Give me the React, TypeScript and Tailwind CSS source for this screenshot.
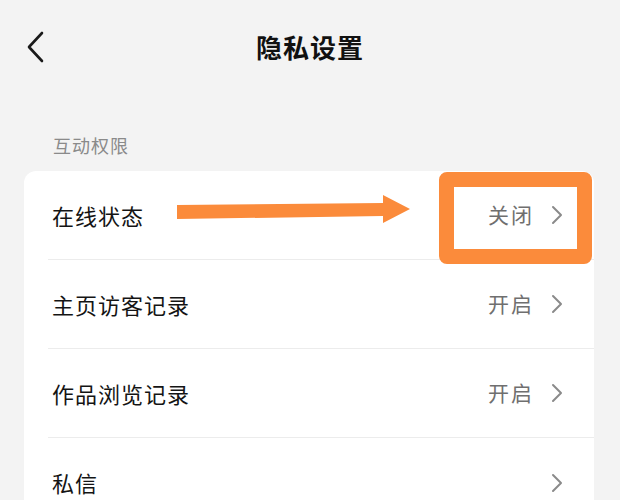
import React from "react";

const Chevron = () => (
  <svg width="14" height="24" viewBox="0 0 14 24" fill="none">
    <path d="M3 4 L11 12 L3 20" stroke="#8a8a8a" strokeWidth="2" strokeLinecap="round" strokeLinejoin="round" />
  </svg>
);

const rows = [
  { label: "在线状态", value: "关闭" },
  { label: "主页访客记录", value: "开启" },
  { label: "作品浏览记录", value: "开启" },
  { label: "私信", value: "" },
];

export default function App() {
  return (
    <div
      className="w-[620px] h-[500px] overflow-hidden bg-[#f3f3f3]"
      style={{ fontFamily: '"Noto Sans CJK SC", "Noto Sans", sans-serif' }}
    >
      <div className="grid grid-cols-[1fr_auto_1fr] items-center h-[94px]">
        <div className="pl-[24px] flex items-center">
          <svg width="22" height="34" viewBox="0 0 22 34" fill="none">
            <path d="M18 3 L5 17 L18 31" stroke="#1a1a1a" strokeWidth="2.6" strokeLinecap="round" strokeLinejoin="round" />
          </svg>
        </div>
        <div className="text-[26px] font-bold text-[#111] leading-none tracking-[1px]">隐私设置</div>
        <div />
      </div>
      <div className="pl-[53px] pt-[38px] pb-[13px] text-[18px] leading-[26px] text-[#8a8a8a] tracking-[1px]">互动权限</div>
      <div className="relative ml-[24px] w-[570px] bg-white rounded-[12px]">
        {rows.map((r, i) => (
          <div key={i} className="h-[89px] flex flex-col">
            <div className="flex-1 flex items-center justify-between pl-[28px] pr-[30px]">
              <span className="text-[22px] text-[#141414] tracking-[1px]">{r.label}</span>
              <span className="flex items-center gap-[16px]">
                {r.value && <span className="text-[21px] text-[#6f6f6f] tracking-[2px]">{r.value}</span>}
                <Chevron />
              </span>
            </div>
            {i < rows.length - 1 && <div className="ml-[24px] h-[1px] bg-[#ececec]" />}
          </div>
        ))}
        <div className="absolute left-[415px] top-[1px] w-[153px] h-[92px] border-[15px] border-[#fb8b3b] rounded-[8px]" />
        <svg className="absolute left-[153px] top-[24px]" width="234" height="30" viewBox="0 0 234 30">
          <path d="M0 10 L206 8 L206 0 L233 14 L206 28 L206 21 L0 24 Z" fill="#fb8b3b" />
        </svg>
      </div>
    </div>
  );
}
